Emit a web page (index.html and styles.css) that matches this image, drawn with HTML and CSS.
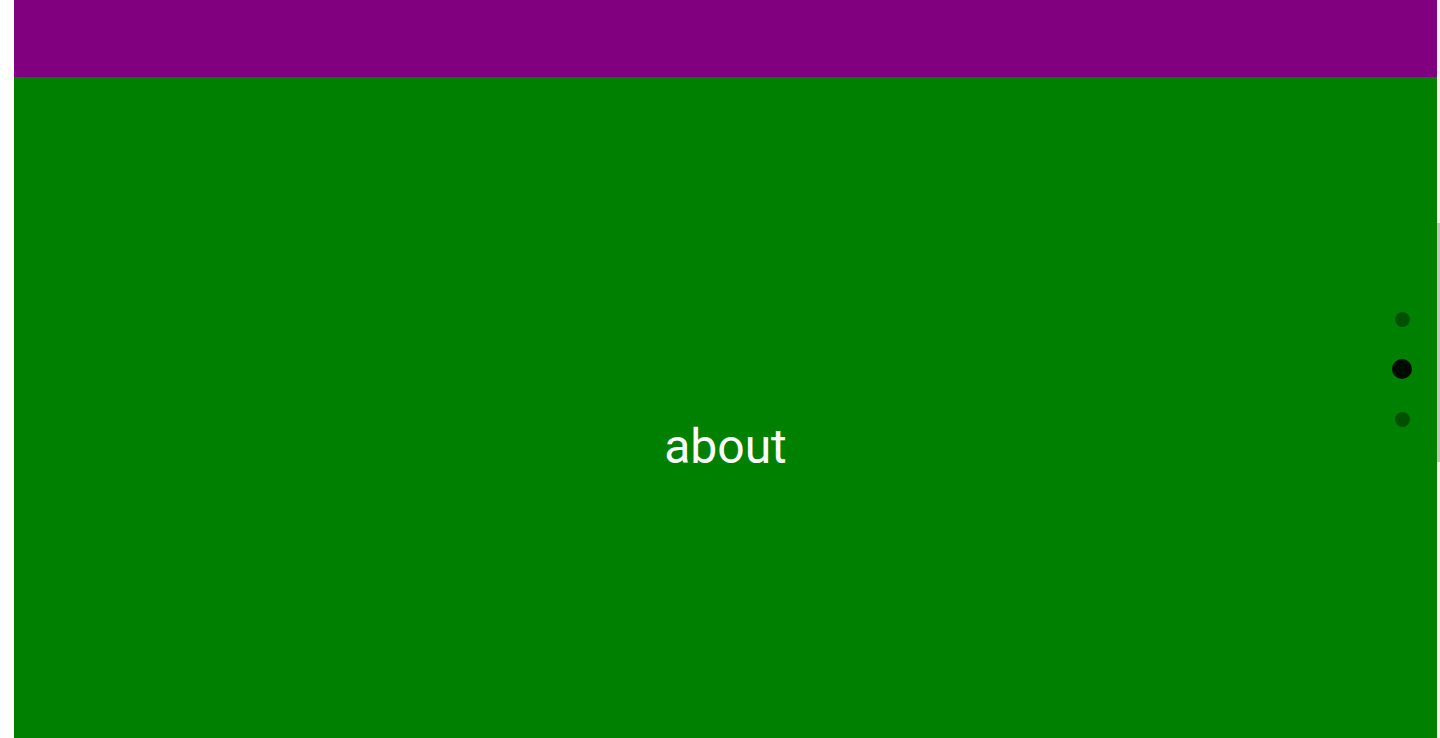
FILE: index.html
```html
<!DOCTYPE html>
<html lang="en">
<head>
<meta charset="utf-8">
<title>about</title>
<link rel="stylesheet" href="styles.css">
</head>
<body>
<div class="gutter"></div>
<main class="page">
  <header class="topbar"></header>
  <section class="panel">
    <h1 class="panel-title">about</h1>
  </section>
</main>
<nav class="dots">
  <span class="dot"></span>
  <span class="dot dot-active"></span>
  <span class="dot"></span>
</nav>
<div class="scrolltrack"><div class="scrollthumb"></div></div>
</body>
</html>
```
FILE: styles.css
```css
html, body {
  margin: 0;
  padding: 0;
  height: 738px;
  overflow: hidden;
  background: #ffffff;
}
body {
  display: flex;
  font-family: Roboto, "Liberation Sans", sans-serif;
}
.gutter {
  flex: 0 0 14px;
}
.page {
  flex: 1 1 auto;
  display: flex;
  flex-direction: column;
  min-width: 0;
  height: 738px;
  overflow: hidden;
}
.topbar {
  flex: 0 0 77px;
  background: #800080;
}
.panel {
  flex: 0 0 738px;
  background: #008000;
  display: flex;
  align-items: center;
  justify-content: center;
}
.panel-title {
  margin: 0;
  color: #ffffff;
  font-weight: 400;
  font-size: 48px;
  line-height: 1;
  padding-top: 1px;
}
.dots {
  position: fixed;
  right: 28px;
  top: 309px;
  width: 20px;
  display: flex;
  flex-direction: column;
  align-items: center;
  gap: 30px;
}
.dot {
  width: 20px;
  height: 20px;
  display: flex;
  align-items: center;
  justify-content: center;
}
.dot::before {
  content: "";
  width: 15px;
  height: 15px;
  border-radius: 50%;
  background: #005000;
}
.dot-active::before {
  width: 20px;
  height: 20px;
  background: #000b00;
}
.scrolltrack {
  flex: 0 0 3px;
  background: #f1f1f1;
}
.scrollthumb {
  margin-top: 223px;
  height: 239px;
  background: #c4c4c4;
}
```
